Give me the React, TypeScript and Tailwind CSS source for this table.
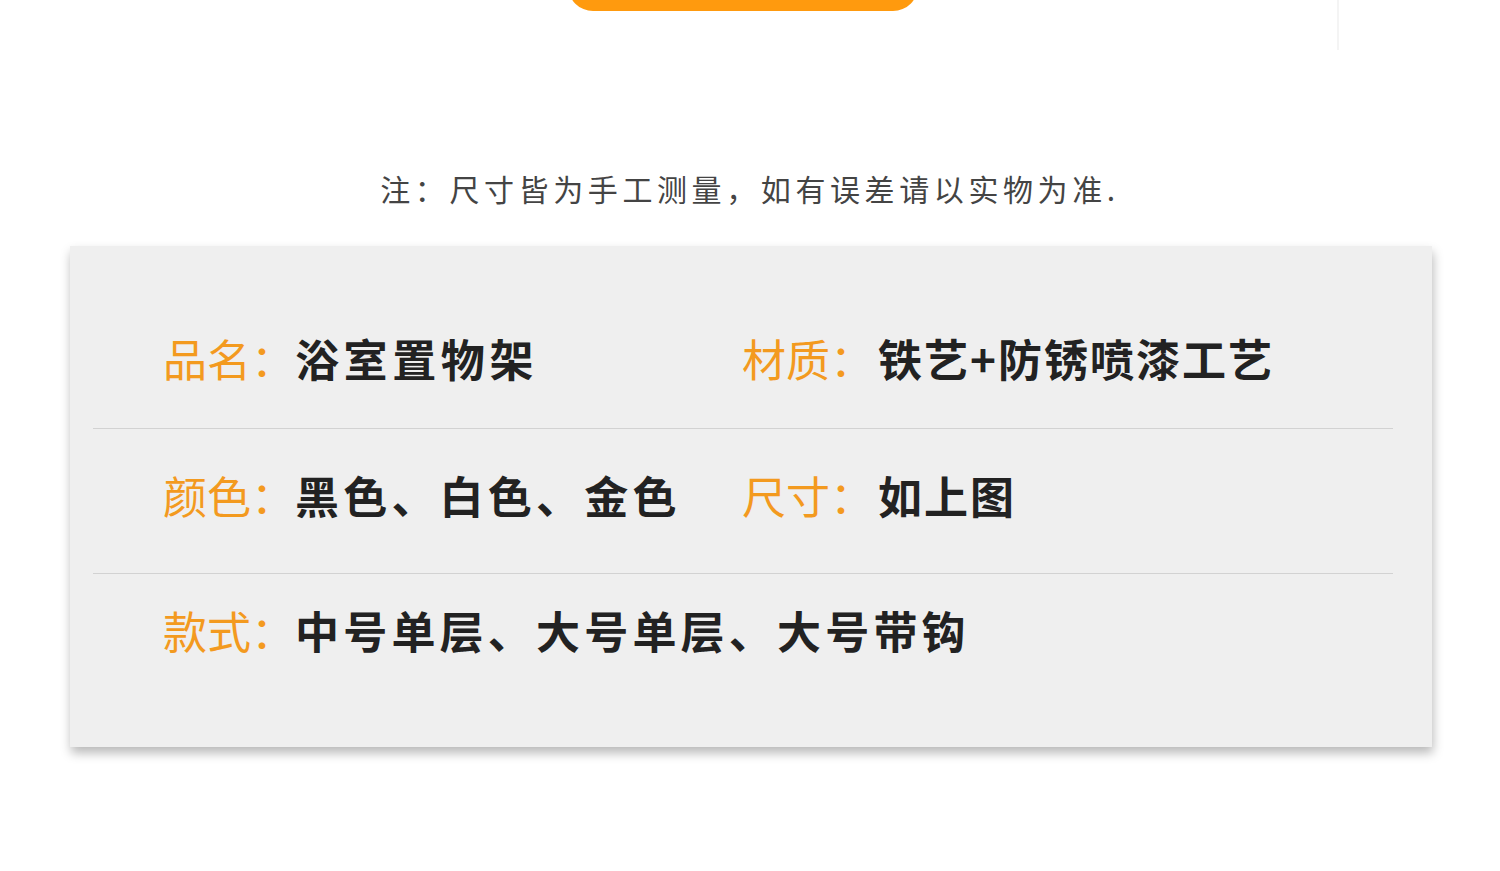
import React from "react";

const font = { fontFamily: '"Noto Sans CJK SC", "Noto Sans", sans-serif' };

function Field({ label, value, track }: { label: string; value: string; track: string }) {
  return (
    <div className="flex items-center whitespace-nowrap">
      <span className="w-[132px] shrink-0 text-[44px] leading-none text-[#f39a1f]">{label}</span>
      <span className={"text-[44px] leading-none font-semibold text-[#222222] " + track}>{value}</span>
    </div>
  );
}

export default function App() {
  return (
    <div className="relative w-[1500px] h-[871px] bg-white overflow-hidden" style={font}>
      <div className="absolute left-[1337px] top-0 w-[2px] h-[50px] bg-[#f4f4f4]" />
      <div className="h-[11px] overflow-hidden flex items-end">
        <div className="ml-[568px] w-[350px] h-[50px] shrink-0 rounded-[25px] bg-[#ff9a0e]" />
      </div>
      <div className="mt-[157px] flex justify-center">
        <p className="text-[30px] leading-[40px] text-[#444444] tracking-[4.6px]">
          注：尺寸皆为手工测量，如有误差请以实物为准.
        </p>
      </div>
      <div className="mt-[38px] ml-[70px] w-[1362px] h-[501px] bg-[#efefef] shadow-[1px_6px_10px_rgba(0,0,0,0.28)] pt-[42px]">
        <div className="h-[140px] flex items-center pl-[93px]">
          <div className="w-[579px] shrink-0">
            <Field label="品名：" value="浴室置物架" track="tracking-[4.6px]" />
          </div>
          <div className="flex items-center whitespace-nowrap">
            <span className="w-[136px] shrink-0 text-[44px] leading-none text-[#f39a1f]">材质：</span>
            <span className="text-[44px] leading-none font-semibold text-[#222222] tracking-[2px]">铁艺+防锈喷漆工艺</span>
          </div>
        </div>
        <div className="ml-[23px] mr-[39px] h-px bg-[#d2d2d2]" />
        <div className="h-[132px] flex items-center pl-[93px]">
          <div className="w-[579px] shrink-0">
            <Field label="颜色：" value="黑色、白色、金色" track="tracking-[4.2px]" />
          </div>
          <div className="flex items-center whitespace-nowrap">
            <span className="w-[136px] shrink-0 text-[44px] leading-none text-[#f39a1f]">尺寸：</span>
            <span className="text-[44px] leading-none font-semibold text-[#222222] tracking-[2px]">如上图</span>
          </div>
        </div>
        <div className="mt-[12px] ml-[23px] mr-[39px] h-px bg-[#d2d2d2]" />
        <div className="h-[112px] flex items-center pl-[93px]">
          <Field label="款式：" value="中号单层、大号单层、大号带钩" track="tracking-[4.2px]" />
        </div>
      </div>
    </div>
  );
}
